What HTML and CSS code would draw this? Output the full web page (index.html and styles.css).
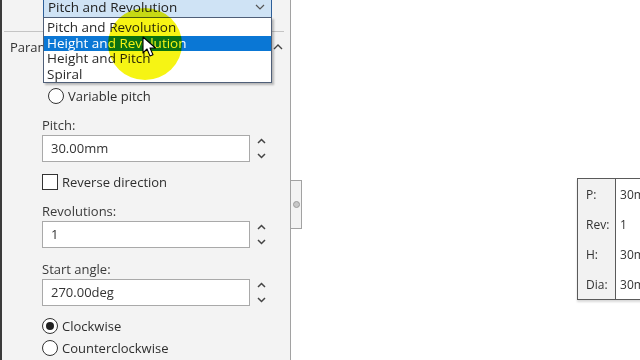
FILE: index.html
```html
<!DOCTYPE html>
<html lang="en">
<head>
    <meta charset="UTF-8">
    <title>Helix / Spiral</title>
    <link rel="stylesheet" href="styles.css">
</head>
<body>
    <div class="app">
        <div class="panel">
            <div class="combo">
                <span>Pitch and Revolution</span>
                <svg class="chev" width="10" height="6" viewBox="0 0 10 6"><path d="M1 1l4 4 4-4" fill="none" stroke="#555" stroke-width="1.2"/></svg>
            </div>
            <div class="divider"></div>
            <div class="group-head">
                <span class="group-title">Parameters</span>
                <svg width="10" height="6" viewBox="0 0 10 6"><path d="M1 5l4-4 4 4" fill="none" stroke="#444" stroke-width="1.4"/></svg>
            </div>
            <div class="group-body">
                <div class="option indent"><span class="radio"></span>Variable pitch</div>

                <div class="field-label">Pitch:</div>
                <div class="spin-row">
                    <div class="textbox">30.00mm</div>
                    <div class="spinner">
                        <svg width="9" height="6" viewBox="0 0 9 6"><path d="M1 5l3.5-3.5L8 5" fill="none" stroke="#444" stroke-width="1.5"/></svg>
                        <svg width="9" height="6" viewBox="0 0 9 6"><path d="M1 1l3.5 3.5L8 1" fill="none" stroke="#444" stroke-width="1.5"/></svg>
                    </div>
                </div>

                <div class="option check-row"><span class="checkbox"></span>Reverse direction</div>

                <div class="field-label">Revolutions:</div>
                <div class="spin-row">
                    <div class="textbox">1</div>
                    <div class="spinner">
                        <svg width="9" height="6" viewBox="0 0 9 6"><path d="M1 5l3.5-3.5L8 5" fill="none" stroke="#444" stroke-width="1.5"/></svg>
                        <svg width="9" height="6" viewBox="0 0 9 6"><path d="M1 1l3.5 3.5L8 1" fill="none" stroke="#444" stroke-width="1.5"/></svg>
                    </div>
                </div>

                <div class="field-label">Start angle:</div>
                <div class="spin-row">
                    <div class="textbox">270.00deg</div>
                    <div class="spinner">
                        <svg width="9" height="6" viewBox="0 0 9 6"><path d="M1 5l3.5-3.5L8 5" fill="none" stroke="#444" stroke-width="1.5"/></svg>
                        <svg width="9" height="6" viewBox="0 0 9 6"><path d="M1 1l3.5 3.5L8 1" fill="none" stroke="#444" stroke-width="1.5"/></svg>
                    </div>
                </div>

                <div class="option cw"><span class="radio checked"></span>Clockwise</div>
                <div class="option ccw"><span class="radio"></span>Counterclockwise</div>
            </div>

            <div class="tab"><span class="dot"></span></div>

            <ul class="dropdown">
                <li>Pitch and Revolution</li>
                <li class="active">Height and Revolution</li>
                <li>Height and Pitch</li>
                <li>Spiral</li>
            </ul>
            <div class="spot"></div>
            <svg class="pointer" width="14" height="22" viewBox="0 0 14 22">
                <path d="M1 1v16l4-4 3 7 3-1.3-3-6.7h5.5z" fill="#fff" stroke="#000" stroke-width="1.1" stroke-linejoin="round"/>
            </svg>
        </div>

        <div class="viewport">
            <table class="callout">
                <tr><td class="key">P:</td><td>30mm</td></tr>
                <tr><td class="key">Rev:</td><td>1</td></tr>
                <tr><td class="key">H:</td><td>30mm</td></tr>
                <tr><td class="key">Dia:</td><td>30mm</td></tr>
            </table>
        </div>
    </div>
</body>
</html>
```

FILE: styles.css
```css
body {
    margin: 0;
    font-family: "Open Sans", "Noto Sans", sans-serif;
    font-size: 13px;
    color: #2e2e2e;
    background-color: #fff;
    overflow: hidden;
}
.app {
    display: flex;
    height: 360px;
}
.panel {
    position: relative;
    width: 291px;
    box-sizing: border-box;
    flex-shrink: 0;
    background-color: #f3f3f3;
    border-left: 2px solid #3a3a3a;
    border-right: 1px solid #a2a2a2;
}
.combo {
    display: flex;
    justify-content: space-between;
    align-items: center;
    box-sizing: border-box;
    width: 229px;
    height: 23px;
    margin: -5px 0 0 41px;
    padding: 0 6px 0 4px;
    background-color: #cfe3f5;
    border: 1px solid #2d5f9a;
    font-size: 13.5px;
    color: #222;
}
.divider {
    height: 1px;
    margin: 13px 6px 0 2px;
    background-color: #c4c4c4;
}
.group-head {
    display: flex;
    justify-content: space-between;
    align-items: center;
    height: 16px;
    margin-top: 7px;
    padding: 0 7px 0 8px;
    color: #333;
}
.group-title {
    width: 33px;
    overflow: hidden;
    white-space: nowrap;
}
.group-body {
    padding-left: 40px;
}
.option {
    display: flex;
    align-items: center;
    gap: 4px;
    height: 16px;
}
.option.indent {
    margin-top: 33px;
    padding-left: 6px;
}
.radio {
    width: 14px;
    height: 14px;
    border: 1px solid #333;
    border-radius: 50%;
    background-color: #fff;
    position: relative;
}
.radio.checked::after {
    content: "";
    position: absolute;
    left: 3px;
    top: 3px;
    width: 8px;
    height: 8px;
    border-radius: 50%;
    background-color: #222;
}
.checkbox {
    width: 14px;
    height: 14px;
    border: 1px solid #333;
    background-color: #fff;
}
.field-label {
    height: 16px;
    line-height: 16px;
    margin-top: 13px;
    margin-bottom: 2px;
    color: #3a3a3a;
}
.check-row {
    margin-top: 12px;
}
.spin-row {
    display: flex;
    align-items: center;
    gap: 5px;
}
.textbox {
    box-sizing: border-box;
    width: 208px;
    height: 27px;
    line-height: 25px;
    padding-left: 8px;
    background-color: #fff;
    border: 1px solid #a9a9a9;
    color: #333;
}
.spinner {
    display: flex;
    flex-direction: column;
    gap: 9px;
    padding-left: 2px;
}
.spinner svg {
    display: block;
}
.cw {
    margin-top: 12px;
}
.ccw {
    margin-top: 6px;
}
.tab {
    position: absolute;
    right: -12px;
    top: 180px;
    width: 10px;
    height: 47px;
    background-color: #f3f3f3;
    border: 1px solid #a2a2a2;
    border-left: none;
    display: flex;
    align-items: center;
    justify-content: center;
}
.dot {
    width: 5px;
    height: 5px;
    border-radius: 50%;
    background-color: #c8c8c8;
    border: 1px solid #9c9c9c;
}
.dropdown {
    position: absolute;
    left: 41px;
    top: 17px;
    width: 229px;
    height: 66px;
    box-sizing: border-box;
    margin: 0;
    padding: 2px 0 0;
    list-style: none;
    background-color: #fff;
    border: 1px solid #4f5f78;
    box-shadow: 2px 2px 2px rgba(0, 0, 0, 0.25);
    font-size: 13.5px;
    color: #2a2a2a;
}
.dropdown li {
    height: 15.6px;
    line-height: 15.6px;
    padding-left: 3px;
}
.dropdown li.active {
    background-color: #0a77d5;
    color: #fff;
}
.spot {
    position: absolute;
    left: 106px;
    top: 8px;
    width: 74px;
    height: 72px;
    border-radius: 50%;
    background-color: #f6f400;
    mix-blend-mode: multiply;
    opacity: 0.92;
}
.pointer {
    position: absolute;
    left: 140px;
    top: 36px;
}
.viewport {
    flex: 1;
    padding: 178px 0 0 286px;
    overflow: hidden;
}
.callout {
    border-collapse: collapse;
    border: 1px solid #5a5a5a;
    box-shadow: 0 2px 2px rgba(0, 0, 0, 0.15);
    font-size: 12px;
    color: #333;
    width: 80px;
}
.callout td {
    height: 30px;
    padding: 0 0 0 4px;
    background-color: #fff;
    white-space: nowrap;
}
.callout td.key {
    width: 31px;
    padding-left: 8px;
    background-color: #f2f2f2;
    border-right: 1px solid #5a5a5a;
}
```
